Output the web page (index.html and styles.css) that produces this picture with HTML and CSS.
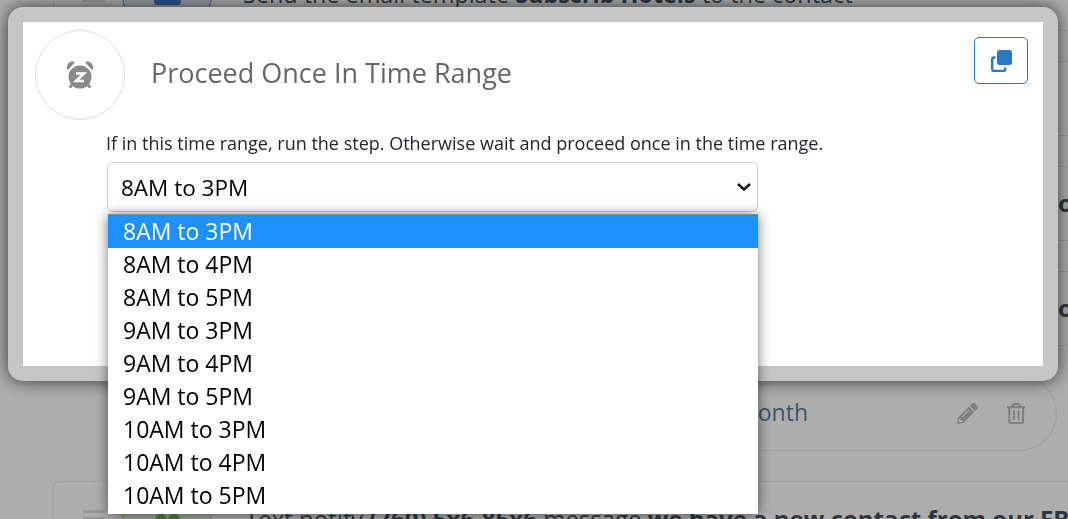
FILE: index.html
```html
<!DOCTYPE html>
<html lang="en">
<head>
  <meta charset="UTF-8">
  <meta name="viewport" content="width=device-width, initial-scale=1.0">
  <title>Proceed Once In Time Range</title>
  <link rel="stylesheet" href="styles.css">
</head>
<body>
  <div class="steps">
    <div class="step step-email">
      <div class="handle"><span></span><span></span><span></span></div>
      <div class="step-icon step-icon-blue"><span class="glyph-mail"></span></div>
      <div class="step-text">Send the email template <b>Subscrib Hotels</b> to the contact</div>
    </div>
    <div class="step">
      <div class="handle"><span></span><span></span><span></span></div>
      <div class="step-icon step-icon-blue"></div>
    </div>
    <div class="step">
      <div class="step-tail"><b>o</b></div>
    </div>
    <div class="step">
      <div class="step-tail"><b>o</b></div>
    </div>
    <div class="step step-pill">
      <div class="pill-text">Wait for 1 month</div>
      <svg class="pill-action pencil" viewBox="0 0 512 512"><path d="M497.9 142.1l-46.1 46.1c-4.7 4.7-12.3 4.7-17 0l-111-111c-4.7-4.7-4.7-12.3 0-17l46.1-46.1c18.7-18.7 49.1-18.7 67.9 0l60.1 60.1c18.8 18.7 18.8 49.1 0 67.9zM284.2 99.8L21.6 362.4.4 483.9c-2.9 16.4 11.4 30.6 27.8 27.8l121.5-21.3 262.6-262.6c4.7-4.7 4.7-12.3 0-17l-111-111c-4.8-4.7-12.4-4.7-17.1 0zM124.1 339.9c-5.5-5.5-5.5-14.3 0-19.8l154-154c5.5-5.5 14.3-5.5 19.8 0s5.5 14.3 0 19.8l-154 154c-5.5 5.5-14.3 5.5-19.8 0zM88 424h48v36.3l-64.5 11.3-31.1-31.1L51.7 376H88v48z"/></svg>
      <svg class="pill-action trash" viewBox="0 0 448 512"><path d="M268 416h24a12 12 0 0 0 12-12V188a12 12 0 0 0-12-12h-24a12 12 0 0 0-12 12v216a12 12 0 0 0 12 12zM432 80h-82.41l-34-56.7A48 48 0 0 0 274.41 0H173.59a48 48 0 0 0-41.16 23.3L98.41 80H16A16 16 0 0 0 0 96v16a16 16 0 0 0 16 16h16v336a48 48 0 0 0 48 48h288a48 48 0 0 0 48-48V128h16a16 16 0 0 0 16-16V96a16 16 0 0 0-16-16zM171.84 50.91A6 6 0 0 1 177 48h94a6 6 0 0 1 5.15 2.91L293.61 80H154.39zM368 464H80V128h288zm-212-48h24a12 12 0 0 0 12-12V188a12 12 0 0 0-12-12h-24a12 12 0 0 0-12 12v216a12 12 0 0 0 12 12z"/></svg>
    </div>
    <div class="step">
      <div class="handle"><span></span><span></span><span></span></div>
      <div class="step-icon step-icon-green"><span class="glyph-lobes"><i></i><i></i></span></div>
      <div class="step-text">Text notify <b>(760) 5x6-85x6</b> message <b>we have a new contact from our FB</b></div>
    </div>
  </div>

  <div class="overlay">
    <div class="modal">
      <div class="modal-head">
        <div class="modal-icon">
          <svg class="alarm" viewBox="0 0 28 28">
            <circle class="alarm-body" cx="14" cy="16" r="11.500"/>
            <path class="alarm-body" d="M1.200 8.200C-.2 4.800 2.800.2 7 .2c1 0 1.700.8 1.300 1.500L2.600 8.400c-.5.500-1.100.400-1.400-.2zM26.800 8.200c1.400-3.400-1.600-8-5.800-8-1 0-1.700.8-1.300 1.500l5.700 6.700c.5.500 1.100.400 1.400-.2z"/>
            <path class="alarm-feet" d="M6 24 4.500 25.500M22 24 23.500 25.500"/>
            <path class="alarm-z" d="M10 12.500h8l-8 7.500h8"/>
          </svg>
        </div>
        <h1 class="modal-title">Proceed Once In Time Range</h1>
        <button class="copy-btn" type="button" aria-label="Copy">
          <svg class="copy-icon" viewBox="0 0 21 22">
            <rect x="6" y="0" width="15" height="15" rx="2.500"/>
            <path d="M4.500 7.500H3a1.800 1.800 0 0 0-1.800 1.800v9.900A1.800 1.800 0 0 0 3 21h9.400a1.800 1.800 0 0 0 1.800-1.800V17.500"/>
          </svg>
        </button>
      </div>
      <div class="modal-body">
        <p class="help">If in this time range, run the step. Otherwise wait and proceed once in the time range.</p>
        <div class="select-wrap">
          <select class="range-select">
            <option>8AM to 3PM</option>
          </select>
          <svg class="select-arrow" viewBox="0 0 14 8"><path d="M1 1l6 5.500L13 1"/></svg>
          <ul class="range-list">
            <li class="selected">8AM to 3PM</li>
            <li>8AM to 4PM</li>
            <li>8AM to 5PM</li>
            <li>9AM to 3PM</li>
            <li>9AM to 4PM</li>
            <li>9AM to 5PM</li>
            <li>10AM to 3PM</li>
            <li>10AM to 4PM</li>
            <li>10AM to 5PM</li>
          </ul>
        </div>
      </div>
    </div>
  </div>
</body>
</html>
```

FILE: styles.css
```css
html, body {
  height: 100%;
}

body {
  margin: 0;
  overflow: hidden;
  background-color: #fff;
  font-family: "Open Sans", sans-serif;
  color: #42505f;
}

/* page behind the modal */
.steps {
  display: flex;
  flex-direction: column;
  gap: 30px;
  margin-top: -44px;
  margin-left: 53px;
  width: 1100px;
}

.step {
  display: flex;
  align-items: center;
  flex: none;
  box-sizing: border-box;
  height: 75px;
  padding-left: 29px;
  border: 1px solid #eaeaea;
  border-radius: 6px;
  font-size: 24px;
  white-space: nowrap;
}

.step-email {
  font-size: 23.400px;
}

.step-email .step-icon {
  margin-right: 31px;
}

.handle {
  display: flex;
  flex-direction: column;
  gap: 4px;
  width: 22px;
  margin-right: 17px;
}

.handle span {
  height: 3px;
  background-color: #ddd;
}

.step-icon {
  display: flex;
  align-items: center;
  justify-content: center;
  flex: none;
  box-sizing: border-box;
  width: 90px;
  height: 90px;
  margin-right: 33px;
  border-radius: 50%;
}

.step-icon-blue {
  background-color: #e4ebf5;
  border: 1px solid #5b8fd6;
}

.step-icon-green {
  background-color: #dff3d3;
  border: 1px solid #a9d18e;
}

.glyph-mail {
  width: 27px;
  height: 22px;
  border-radius: 3px;
  background-color: #3f7fd9;
}

.glyph-lobes {
  display: flex;
  gap: 1px;
}

.glyph-lobes i {
  width: 12px;
  height: 10px;
  border-radius: 6px 6px 0 0;
  background-color: #6cbf4a;
}

.step-tail {
  margin-left: 975px;
  padding-bottom: 3px;
}

.step-pill {
  width: 948px;
  margin-left: 56px;
  padding-left: 0;
  border-radius: 6px 37px 37px 6px;
}

.pill-text {
  width: 698px;
  padding-bottom: 3px;
  font-size: 23px;
  color: #5d7d97;
  text-align: right;
}

.pill-action {
  height: 21px;
  fill: #bbb;
}

.pencil {
  margin-left: 149px;
}

.trash {
  margin-left: 29px;
}

/* modal */
.overlay {
  position: fixed;
  top: 0;
  right: 0;
  bottom: 0;
  left: 0;
  padding: 7px 10px 0 8px;
  background-color: rgba(0, 0, 0, 0.32);
}

.modal {
  box-sizing: border-box;
  height: 374px;
  background-color: #fff;
  border: 15px solid #c6c6c6;
  border-radius: 15px;
  box-shadow: 0 0 18px rgba(0, 0, 0, 0.7);
}

.modal-head {
  display: flex;
  align-items: flex-start;
  padding: 8px 15px 0 12px;
}

.modal-icon {
  display: flex;
  align-items: center;
  justify-content: center;
  flex: none;
  box-sizing: border-box;
  width: 90px;
  height: 90px;
  border: 1px solid #ddd;
  border-radius: 50%;
}

.alarm {
  width: 28px;
  height: 28px;
}

.alarm-body {
  fill: #8a8a8a;
}

.alarm-feet {
  fill: none;
  stroke: #8a8a8a;
  stroke-width: 3;
  stroke-linecap: round;
}

.alarm-z {
  fill: none;
  stroke: #fff;
  stroke-width: 2.600;
}

.modal-title {
  flex: 1;
  margin: 23px 0 0 26px;
  font-size: 27px;
  font-weight: 400;
  line-height: 40px;
  color: #666;
}

.copy-btn {
  display: flex;
  align-items: center;
  justify-content: center;
  flex: none;
  width: 54px;
  height: 47px;
  margin-top: 7px;
  padding: 0;
  background-color: #fff;
  border: 1px solid #2a78c2;
  border-radius: 5px;
}

.copy-icon {
  width: 21px;
  height: 22px;
}

.copy-icon rect {
  fill: #2a78c2;
}

.copy-icon path {
  fill: none;
  stroke: #2a78c2;
  stroke-width: 2.400;
}

.modal-body {
  padding: 12px 0 0 84px;
}

.help {
  margin: 0 0 8px -1px;
  font-size: 18px;
  line-height: 22px;
  color: #212529;
}

.select-wrap {
  position: relative;
  width: 651px;
}

.range-select {
  display: block;
  width: 100%;
  height: 50px;
  padding: 0 13px;
  appearance: none;
  background-color: #fff;
  border: 1px solid #ccc;
  border-radius: 6px;
  font-family: inherit;
  font-size: 22.500px;
  color: #000;
}

.select-arrow {
  position: absolute;
  top: 21px;
  right: 7px;
  width: 14px;
  height: 8px;
  fill: none;
  stroke: #111;
  stroke-width: 2.400;
}

.range-list {
  position: absolute;
  top: 52px;
  left: 1px;
  right: 0;
  margin: 0;
  padding: 0 0 2px;
  list-style: none;
  background-color: #fff;
  border-top: 1px solid #8a8a8a;
  box-shadow: 0 1px 12px rgba(0, 0, 0, 0.55);
  font-size: 23px;
  line-height: 33px;
  color: #000;
}

.range-list li {
  padding-left: 15px;
}

.range-list .selected {
  background-color: #1e90ff;
  color: #fff;
}
```
